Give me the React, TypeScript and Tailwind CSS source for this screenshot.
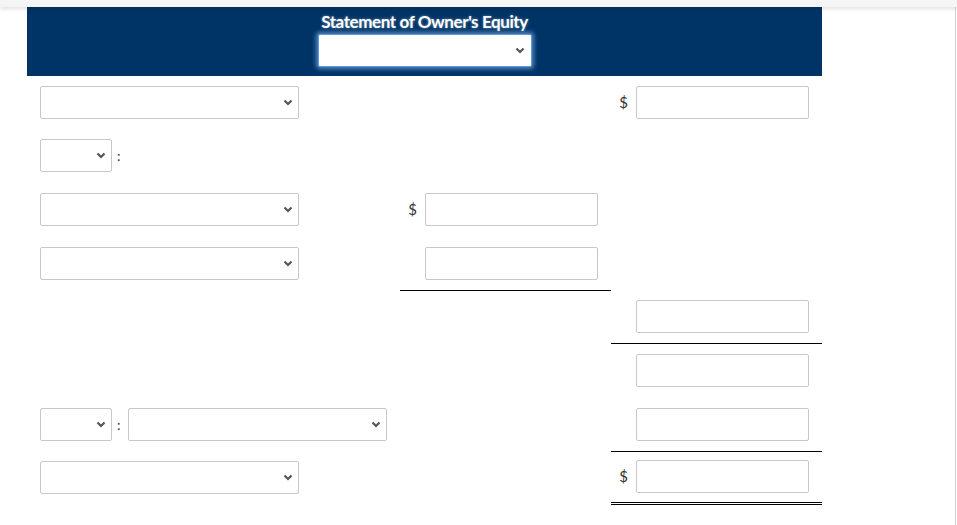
import React from 'react';

type Cell = { dollar?: boolean; input?: boolean; line?: 'single' | 'double' };
type Row = { first?: 'select' | 'label' | 'pair'; mid?: Cell; last?: Cell };

const rows: Row[] = [
  { first: 'select', last: { dollar: true, input: true } },
  { first: 'label' },
  { first: 'select', mid: { dollar: true, input: true } },
  { first: 'select', mid: { input: true, line: 'single' } },
  { last: { input: true, line: 'single' } },
  { last: { input: true } },
  { first: 'pair', last: { input: true, line: 'single' } },
  { first: 'select', last: { dollar: true, input: true, line: 'double' } },
];

function Chevron() {
  return (
    <svg width="10" height="7" viewBox="0 0 10 7" className="shrink-0">
      <path d="M1.5 1.5l3.5 3.5 3.5-3.5" fill="none" stroke="#555" strokeWidth="2.2" />
    </svg>
  );
}

function Select({ width }: { width: string }) {
  return (
    <div
      className={`${width} h-[33px] flex items-center justify-end pr-[5px] bg-white border border-[#c8c8c8] rounded-[2px]`}
    >
      <Chevron />
    </div>
  );
}

function AmountCell({ cell }: { cell?: Cell }) {
  const line =
    cell?.line === 'double'
      ? 'border-b-[3px] border-double border-black'
      : cell?.line === 'single'
      ? 'border-b border-black'
      : 'border-b border-transparent';
  return (
    <div className={`flex items-center justify-end gap-[8px] pr-[13px] ${line}`}>
      {cell?.dollar && <span className="text-[15px] text-[#333] leading-none">$</span>}
      {cell?.input && (
        <div className="w-[173px] h-[33px] bg-white border border-[#c8c8c8] rounded-[2px]" />
      )}
    </div>
  );
}

export default function App() {
  return (
    <div className="relative min-h-[525px] bg-white font-['Lato','Liberation_Sans',sans-serif]">
      {/* top strip */}
      <div className="relative z-10 h-[7px] bg-[#f5f5f5] shadow-[0_2px_4px_rgba(0,0,0,0.12)]" />
      <div className="absolute right-[1px] top-[7px] bottom-0 w-px bg-[#d2d2d2]" />

      <div className="ml-[27px] w-[795px]">
        {/* Header */}
        <div className="h-[69px] bg-[#003466] flex flex-col items-center pt-[3px]">
          <h1 className="text-[17px] leading-[24px] font-bold text-white tracking-[-0.4px] [text-shadow:0_0_3px_rgba(255,255,255,0.45)]">
            Statement of Owner's Equity
          </h1>
          <div className="w-[214px] h-[33px] bg-white border border-[#5a9be0] rounded-[2px] shadow-[0_0_4px_2px_rgba(120,170,230,0.7)] flex items-center justify-end pr-[6px]">
            <Chevron />
          </div>
        </div>

        {/* Rows */}
        {rows.map((row, i) => (
          <div key={i} className="grid grid-cols-[373px_211px_211px] h-[53.67px]">
            <div className="flex items-center pl-[13px] border-b border-transparent">
              {row.first === 'select' && <Select width="w-[259px]" />}
              {row.first === 'label' && (
                <>
                  <Select width="w-[72px]" />
                  <span className="ml-[5px] text-[14px] text-[#333]">:</span>
                </>
              )}
              {row.first === 'pair' && (
                <>
                  <Select width="w-[72px]" />
                  <span className="ml-[5px] mr-[7px] text-[14px] text-[#333]">:</span>
                  <Select width="w-[259px]" />
                </>
              )}
            </div>
            <AmountCell cell={row.mid} />
            <AmountCell cell={row.last} />
          </div>
        ))}
      </div>
    </div>
  );
}
